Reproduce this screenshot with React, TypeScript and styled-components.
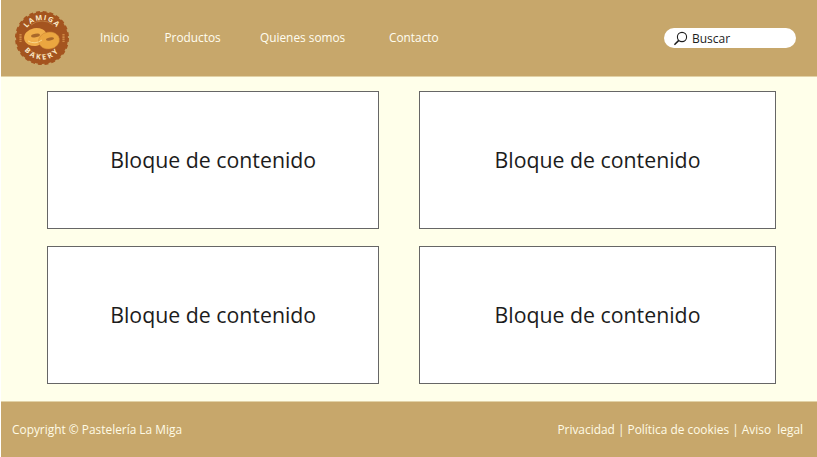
import React from "react";
import styled, { createGlobalStyle } from "styled-components";

const Global = createGlobalStyle`
  html, body { margin: 0; padding: 0; background: #ffffff; }
  body { font-family: "Open Sans", "Liberation Sans", sans-serif; }
`;

const Page = styled.div`
  width: 817px;
  height: 457px;
  box-sizing: border-box;
  padding-left: 1px;
  display: flex;
  flex-direction: column;
  overflow: hidden;
`;

const Header = styled.header`
  height: 77px;
  background: #c7a76b;
  display: flex;
  align-items: center;
  padding: 0 21px 0 13px;
  box-sizing: border-box;
  border-bottom: 1px solid #e2d2a6;
`;

const Nav = styled.nav`
  display: flex;
  align-items: center;
  margin-left: 30px;
  margin-bottom: 2px;
  flex: 1;
`;

const NavLink = styled.a<{ $w: number }>`
  width: ${(p) => p.$w}px;
  flex: none;
  color: #fffdf0;
  font-size: 11.85px;
  line-height: 18px;
  white-space: nowrap;
`;

const Search = styled.div`
  width: 132px;
  height: 20px;
  border-radius: 10px;
  background: #ffffff;
  display: flex;
  align-items: center;
  box-sizing: border-box;
  padding-left: 9px;
  gap: 4px;
  color: #1c1c1c;
  font-size: 12px;
`;

const Main = styled.main`
  flex: 1;
  background: #ffffea;
  display: grid;
  grid-template-columns: 332.4px 357px;
  grid-template-rows: 138px 138px;
  column-gap: 39.6px;
  row-gap: 17px;
  padding: 14px 0 0 46px;
  box-sizing: border-box;
`;

const Card = styled.section`
  background: #ffffff;
  border: 1px solid #666666;
  box-sizing: border-box;
  display: flex;
  align-items: center;
  justify-content: center;
  color: #1c1c1c;
  font-size: 21.3px;
  padding-bottom: 1px;
`;

const Footer = styled.footer`
  height: 56px;
  background: #c7a76b;
  border-top: 1px solid #e2d2a6;
  box-sizing: border-box;
  display: flex;
  align-items: center;
  justify-content: space-between;
  padding: 0 14px 2px 11px;
  color: #fffbe6;
  font-size: 11.9px;
`;

const Legal = styled.div`
  white-space: pre;
`;

const Logo = () => (
  <svg width="56" height="56" viewBox="0 0 56 56" style={{ flex: "none" }}>
    <defs>
      <path id="arcTop" d="M10 28 A18 18 0 0 1 46 28" />
      <path id="arcBottom" d="M6.5 28 A21.5 21.5 0 0 0 49.5 28" />
    </defs>
    <circle cx="28" cy="28" r="26" fill="none" stroke="#a4541f" strokeWidth="2" strokeDasharray="4 2.8" />
    <circle cx="28" cy="28" r="26" fill="#a4541f" />
    <text fontFamily="Open Sans, sans-serif" fontSize="7.2" fontWeight="700" fill="#fbe9c8" letterSpacing="1.2">
      <textPath href="#arcTop" startOffset="50%" textAnchor="middle">LAMIGA</textPath>
    </text>
    <text fontFamily="Open Sans, sans-serif" fontSize="7.2" fontWeight="700" fill="#fbe9c8" letterSpacing="2.2">
      <textPath href="#arcBottom" startOffset="50%" textAnchor="middle">BAKERY</textPath>
    </text>
    <path d="M17 15 A17 17 0 0 1 39 15" fill="none" stroke="#d9a35f" strokeWidth="0.5" />
    <path d="M17 41 A17 17 0 0 0 39 41" fill="none" stroke="#d9a35f" strokeWidth="0.5" />
    <ellipse cx="21.5" cy="27" rx="11.5" ry="9" fill="#f0ae4a" transform="rotate(-10 21.5 27)" />
    <ellipse cx="35" cy="30.5" rx="10.5" ry="8.5" fill="#eba640" stroke="#c98233" strokeWidth="0.5" transform="rotate(-10 35 30.5)" />
    <ellipse cx="21.5" cy="25.5" rx="4.5" ry="1.8" fill="#a9682a" transform="rotate(-10 21.5 25.5)" />
    <ellipse cx="36" cy="29" rx="4" ry="1.6" fill="#a9682a" transform="rotate(-10 36 29)" />
    <path d="M14 31 Q21 35 28 30" fill="none" stroke="#f8d488" strokeWidth="1" />
    <path d="M6.5 24 L6.5 32 M49.5 24 L49.5 32" stroke="#d08a45" strokeWidth="2.2" strokeDasharray="1.6 0.7" />
  </svg>
);

const SearchIcon = () => (
  <svg width="15" height="15" viewBox="0 0 15 15" fill="none" stroke="#1c1c1c">
    <circle cx="9" cy="6" r="4.6" strokeWidth="1.1" />
    <path d="M5.8 9.4 L1.4 13.8" strokeWidth="1.5" />
  </svg>
);

export default function App() {
  return (
    <Page>
      <Global />
      <Header>
        <Logo />
        <Nav>
          <NavLink $w={64.5}>Inicio</NavLink>
          <NavLink $w={95.5}>Productos</NavLink>
          <NavLink $w={129}>Quienes somos</NavLink>
          <NavLink $w={60}>Contacto</NavLink>
        </Nav>
        <Search>
          <SearchIcon />
          Buscar
        </Search>
      </Header>
      <Main>
        <Card>Bloque de contenido</Card>
        <Card>Bloque de contenido</Card>
        <Card>Bloque de contenido</Card>
        <Card>Bloque de contenido</Card>
      </Main>
      <Footer>
        <span>Copyright © Pastelería La Miga</span>
        <Legal>Privacidad | Política de cookies | Aviso  legal</Legal>
      </Footer>
    </Page>
  );
}
